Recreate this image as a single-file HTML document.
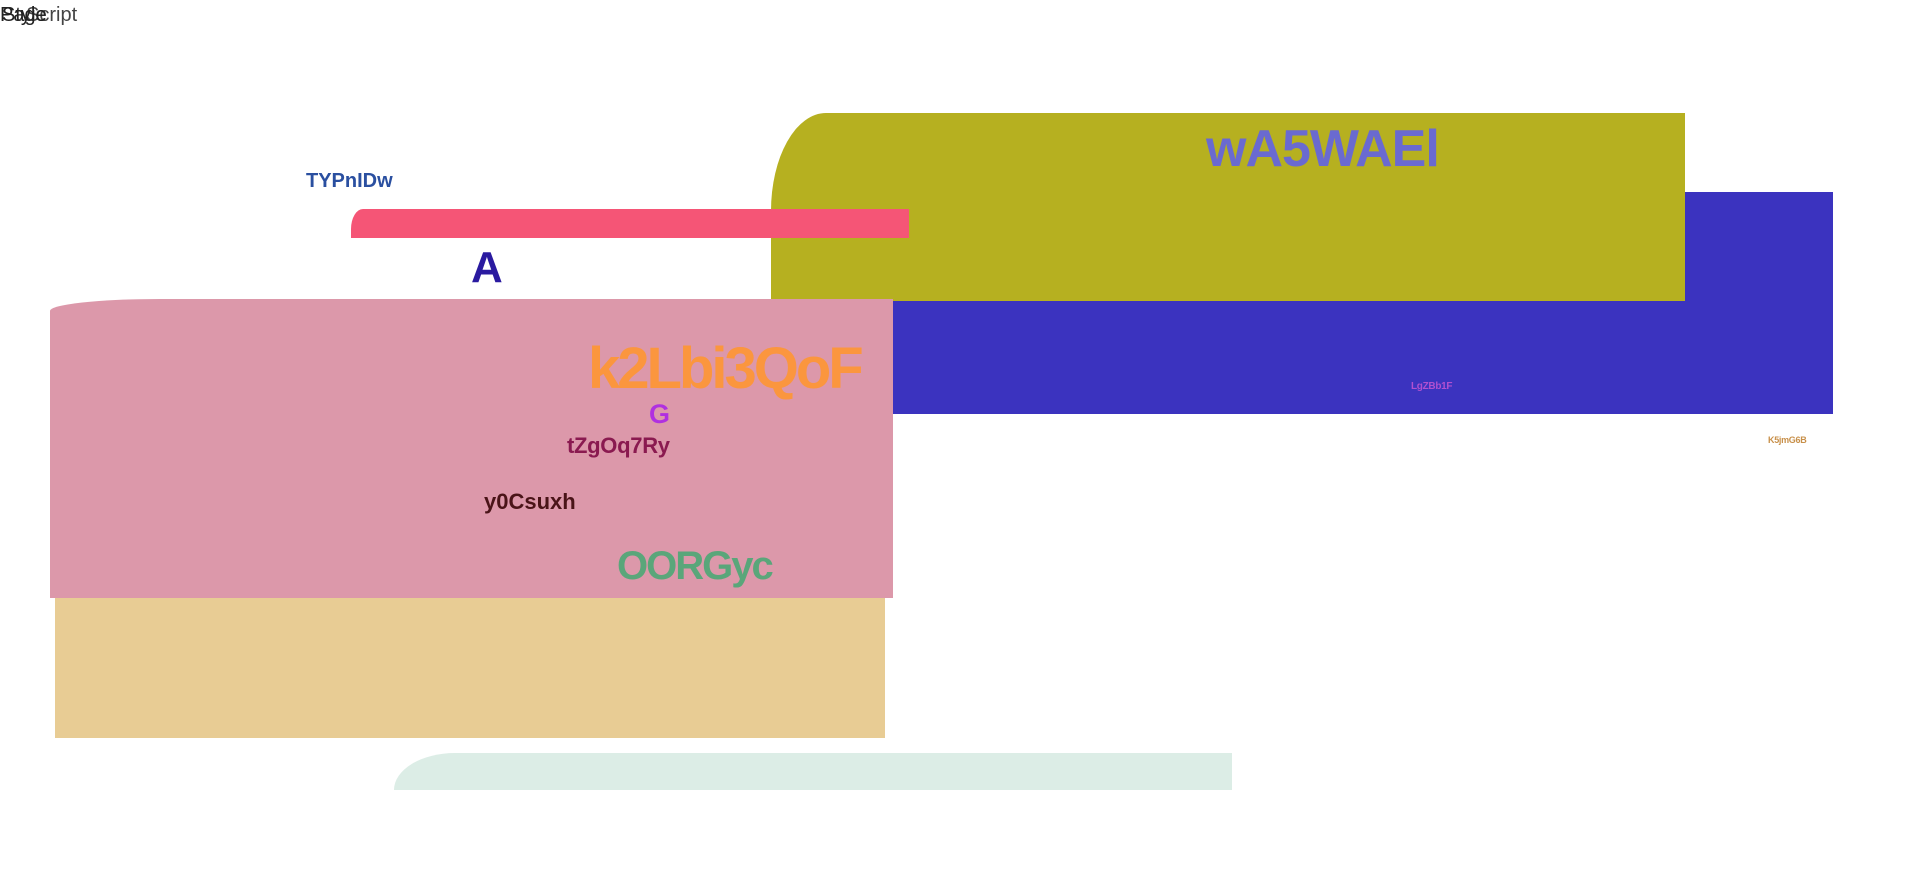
<!DOCTYPE html>
<html><head><meta charset="utf-8"><style>
html,body{margin:0;padding:0;width:1920px;height:870px;overflow:hidden;background:#fff;position:relative}
div{position:absolute}
.t{font-family:"Liberation Sans","DejaVu Sans",sans-serif;font-weight:bold;white-space:nowrap;line-height:1}
</style></head><body>
<div class="t" style="left:26px;top:5px;font-size:20px;font-weight:normal;color:#444">Script</div>
<div class="t" style="left:0;top:5px;font-size:20px;font-weight:normal;color:#222">Page</div>
<div class="t" style="left:2px;top:5px;font-size:20px;font-weight:normal;color:#222">Style</div>
<div style="left:800px;top:192px;width:1033px;height:222px;background:#3b33bf"></div>
<div style="left:771px;top:113px;width:914px;height:188px;background:#b6b020;border-top-left-radius:55px 98px"></div>
<div class="t" style="left:1206px;top:123px;font-size:52px;color:#6a6ad0;letter-spacing:-1px">wA5WAEl</div>
<div style="left:351px;top:209px;width:558px;height:29px;background:#f55576;border-top-left-radius:12px 20px"></div>
<div class="t" style="left:306px;top:171px;font-size:20px;color:#2a4fa0">TYPnIDw</div>
<div class="t" style="left:471px;top:246px;font-size:44px;color:#2a1aa0">A</div>
<div style="left:55px;top:598px;width:830px;height:140px;background:#e8cc94"></div>
<div style="left:50px;top:299px;width:843px;height:299px;background:#dc98aa;border-top-left-radius:110px 12px"></div>
<div class="t" style="left:588px;top:340px;font-size:58px;color:#fb963e;letter-spacing:-3px">k2Lbi3QoF</div>
<div class="t" style="left:649px;top:401px;font-size:27px;color:#b030e0">G</div>
<div class="t" style="left:567px;top:435px;font-size:22px;color:#8a1a50;letter-spacing:-0.3px">tZgOq7Ry</div>
<div class="t" style="left:484px;top:491px;font-size:22px;color:#4a1418">y0Csuxh</div>
<div class="t" style="left:617px;top:546px;font-size:40px;color:#5aa67a;letter-spacing:-2px">OORGyc</div>
<div style="left:394px;top:753px;width:838px;height:37px;background:#dcede6;border-top-left-radius:61px 37px"></div>
<div class="t" style="left:1411px;top:382px;font-size:10px;color:#b050d0;letter-spacing:-0.3px">LgZBb1F</div>
<div class="t" style="left:1768px;top:436px;font-size:9px;color:#c8904a;letter-spacing:-0.3px">K5jmG6B</div>
</body></html>
